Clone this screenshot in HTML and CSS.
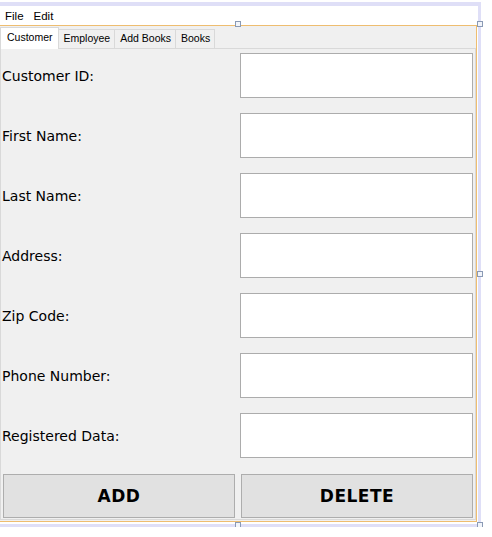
FILE: index.html
```html
<!DOCTYPE html>
<html>
<head>
<meta charset="utf-8">
<link rel="stylesheet" href="styles.css">
</head>
<body>
<div class="designer">
  <div class="menubar">
    <span class="menu">File</span>
    <span class="menu">Edit</span>
  </div>
  <div class="panel">
    <div class="tabs">
      <div class="tab active">Customer</div>
      <div class="tab">Employee</div>
      <div class="tab">Add Books</div>
      <div class="tab">Books</div>
    </div>
    <div class="content">
      <div class="rows">
        <div class="row"><span class="label">Customer ID:</span><div class="field"></div></div>
        <div class="row"><span class="label">First Name:</span><div class="field"></div></div>
        <div class="row"><span class="label">Last Name:</span><div class="field"></div></div>
        <div class="row"><span class="label">Address:</span><div class="field"></div></div>
        <div class="row"><span class="label">Zip Code:</span><div class="field"></div></div>
        <div class="row"><span class="label">Phone Number:</span><div class="field"></div></div>
        <div class="row"><span class="label">Registered Data:</span><div class="field"></div></div>
      </div>
      <div class="buttons">
        <div class="btn">ADD</div>
        <div class="btn">DELETE</div>
      </div>
    </div>
  </div>
  <span class="handle h-top-mid"></span>
  <span class="handle h-top-right"></span>
  <span class="handle h-mid-right"></span>
  <span class="handle h-bot-mid"></span>
  <span class="handle h-bot-right"></span>
</div>
</body>
</html>
```

FILE: styles.css
```css
html, body {
  margin: 0;
  padding: 0;
  background: #ffffff;
}

.designer {
  position: relative;
  margin-top: 2px;
  width: 481px;
  box-sizing: border-box;
  background: #ffffff;
  border-top: 4px solid #dfdff7;
  border-right: 3px solid #dfdff7;
  border-bottom: 3px solid #dfdff7;
  padding-right: 1px;
  padding-bottom: 2px;
}

.menubar {
  height: 19px;
  display: flex;
  align-items: center;
  gap: 10px;
  padding-left: 5px;
  font-family: "Liberation Sans", Arial, sans-serif;
  font-size: 11.5px;
  color: #000;
}

.panel {
  width: 477px;
  box-sizing: border-box;
  background: #f0f0f0;
  border-top: 1px solid #eebd70;
  border-right: 1px solid #eebd70;
  border-bottom: 1px solid #eebd70;
  padding-bottom: 1px;
}

.tabs {
  height: 22px;
  display: flex;
  align-items: flex-end;
  font-family: "Liberation Sans", Arial, sans-serif;
  font-size: 10.5px;
  color: #000;
}

.tab {
  height: 19px;
  box-sizing: border-box;
  line-height: 17px;
  padding: 0 4px 0 5px;
  background: #f0f0f0;
  border: 1px solid #d9d9d9;
  border-left: none;
  border-bottom: none;
}

.tab.active {
  position: relative;
  z-index: 1;
  height: 22px;
  margin-bottom: -1px;
  line-height: 19px;
  padding: 0 5px 0 6px;
  background: #ffffff;
  border-left: 1px solid #d9d9d9;
}

.content {
  width: 476px;
  box-sizing: border-box;
  border: 1px solid #d9d9d9;
  padding: 4px 2px 1px 1px;
  background: #f0f0f0;
}

.rows {
  display: flex;
  flex-direction: column;
  gap: 15px;
}

.row {
  display: flex;
  justify-content: space-between;
  align-items: center;
  height: 45px;
}

.label {
  font-family: "DejaVu Sans", Verdana, sans-serif;
  font-size: 14px;
  color: #000;
}

.field {
  width: 233px;
  height: 45px;
  box-sizing: border-box;
  background: #ffffff;
  border: 1px solid #acacac;
}

.buttons {
  display: flex;
  gap: 6px;
  margin-top: 16px;
  margin-left: 1px;
}

.btn {
  width: 232px;
  height: 44px;
  box-sizing: border-box;
  background: #e1e1e1;
  border: 1px solid #adadad;
  display: flex;
  align-items: center;
  justify-content: center;
  font-family: "DejaVu Sans", Verdana, sans-serif;
  font-weight: bold;
  font-size: 17px;
  letter-spacing: 0.5px;
  color: #000;
}

.handle {
  position: absolute;
  width: 6px;
  height: 6px;
  box-sizing: border-box;
  border: 1px solid #8a9ab5;
  background: #f2f5fa;
  z-index: 2;
}

.h-top-mid { left: 235px; top: 15px; }
.h-top-right { left: 477px; top: 15px; }
.h-mid-right { left: 477px; top: 265px; }
.h-bot-mid { left: 235px; top: 516px; }
.h-bot-right { left: 477px; top: 516px; }
```
